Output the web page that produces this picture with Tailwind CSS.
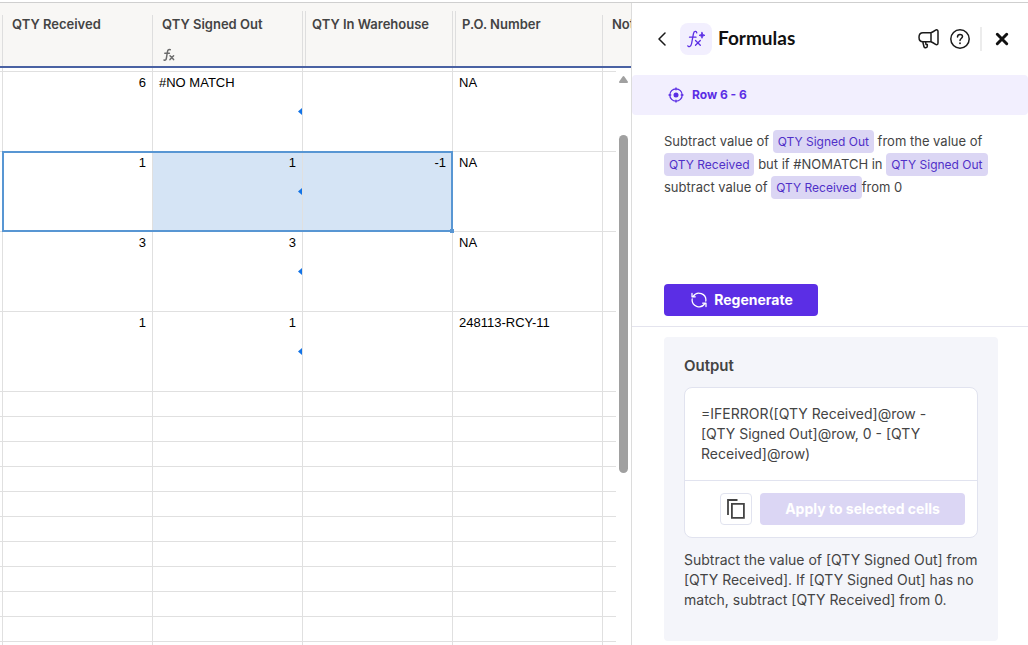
<!DOCTYPE html>
<html lang="en">
<head>
<meta charset="utf-8">
<meta name="viewport" content="width=device-width, initial-scale=1">
<title>Formulas</title>
<script src="https://cdn.jsdelivr.net/npm/@tailwindcss/browser@4"></script>
</head>
<body class="bg-white pt-0.5 font-['Inter',sans-serif] text-[#444]">
<div class="flex h-[calc(100vh-2px)] overflow-hidden border-t border-[#cfcfcf]">

  <!-- Sheet -->
  <main class="relative min-w-0 flex-1 overflow-hidden">
    <table class="w-full table-fixed border-separate border-spacing-0 font-['Liberation_Sans',Arial,sans-serif] text-[13px] leading-[22px] text-black [&_td]:border-r [&_td]:border-b [&_td]:border-[#e0e0e0] [&_td]:p-0 [&_td]:align-top [&_td:last-child]:border-r-0">
      <colgroup>
        <col class="w-[3px]"><col class="w-[150px]"><col class="w-[150px]"><col class="w-[150px]"><col class="w-[150px]"><col>
      </colgroup>
      <thead>
        <tr class="h-[65px] bg-[#f8f7f5] text-left align-top font-['Inter',sans-serif] text-[13px] leading-4 text-[#444] [&>*]:border-b-2 [&>*]:border-[#4a62a3] [&>*]:p-0 [&>*]:align-top [&>*]:font-semibold">
          <th aria-hidden="true"><div class="mt-3 ml-0.5 h-[51px] w-px bg-[#dedede]"></div></th>
          <th scope="col"><div class="mt-3 h-[51px] border-r border-[#dedede] pt-px pl-[9px]">QTY Received</div></th>
          <th scope="col"><div class="mt-2 h-[55px] border-r border-[#dedede] pt-[5px] pl-[9px]">QTY Signed Out
            <svg class="mt-4 ml-px" width="12" height="14" viewBox="0 0 12 14" fill="none" stroke="#6b6b6b" stroke-width="1.5" stroke-linecap="round"><path d="M7.3 1.8C5.6 1 4.7 2 4.4 4L3.4 10.2C3.1 12 2.3 12.6 1 12M1.8 5.3h4.6M7 7.8l3.6 3.8M10.6 7.8L7 11.6"/></svg></div></th>
          <th scope="col"><div class="mt-2 h-[55px] border-r border-[#dedede] pl-0.5"><div class="h-full border-l border-[#dedede] pt-[5px] pl-1.5">QTY In Warehouse</div></div></th>
          <th scope="col"><div class="mt-2 h-[55px] pl-0.5"><div class="h-full border-l border-[#dedede] pt-[5px] pl-1.5">P.O. Number</div></div></th>
          <th scope="col"><div class="mt-3 -ml-px h-[51px] overflow-hidden border-l border-[#dedede] pt-px pl-[9px] whitespace-nowrap">Notes</div></th>
        </tr>
      </thead>
      <tbody>
        <tr class="h-1"><td></td><td></td><td></td><td></td><td></td><td></td></tr>
        <tr class="h-20">
          <td></td><td><div class="pr-1.5 text-right">6</div></td>
          <td><div class="relative h-[79px] pl-1.5">#NO MATCH<svg class="absolute right-0 top-9" width="4" height="7" viewBox="0 0 4 7" fill="#1273e6" aria-hidden="true"><path d="M4 0v7L0 3.5z"/></svg></div></td>
          <td></td><td><div class="pl-1.5">NA</div></td><td></td>
        </tr>
        <tr class="h-20">
          <td></td>
          <td><div class="relative h-[79px] pr-1.5 text-right">1
            <!-- Selection outline across three cells -->
            <div class="absolute -top-px -left-px h-[81px] w-[451px] border-2 border-[#5896d3]"><span class="absolute -right-[3px] -bottom-[3px] size-1 bg-[#5896d3]"></span></div></div></td>
          <td class="bg-[#d5e4f5]"><div class="relative h-[79px] pr-1.5 text-right">1<svg class="absolute right-0 top-9" width="4" height="7" viewBox="0 0 4 7" fill="#1273e6" aria-hidden="true"><path d="M4 0v7L0 3.5z"/></svg></div></td>
          <td class="bg-[#d5e4f5]"><div class="pr-1.5 text-right">-1</div></td><td><div class="pl-1.5">NA</div></td><td></td>
        </tr>
        <tr class="h-20">
          <td></td><td><div class="pr-1.5 text-right">3</div></td>
          <td><div class="relative h-[79px] pr-1.5 text-right">3<svg class="absolute right-0 top-9" width="4" height="7" viewBox="0 0 4 7" fill="#1273e6" aria-hidden="true"><path d="M4 0v7L0 3.5z"/></svg></div></td>
          <td></td><td><div class="pl-1.5">NA</div></td><td></td>
        </tr>
        <tr class="h-20">
          <td></td><td><div class="pr-1.5 text-right">1</div></td>
          <td><div class="relative h-[79px] pr-1.5 text-right">1<svg class="absolute right-0 top-9" width="4" height="7" viewBox="0 0 4 7" fill="#1273e6" aria-hidden="true"><path d="M4 0v7L0 3.5z"/></svg></div></td>
          <td></td><td><div class="pl-1.5">248113-RCY-11</div></td><td></td>
        </tr>
        <tr class="h-[25px]"><td></td><td></td><td></td><td></td><td></td><td></td></tr>
        <tr class="h-[25px]"><td></td><td></td><td></td><td></td><td></td><td></td></tr>
        <tr class="h-[25px]"><td></td><td></td><td></td><td></td><td></td><td></td></tr>
        <tr class="h-[25px]"><td></td><td></td><td></td><td></td><td></td><td></td></tr>
        <tr class="h-[25px]"><td></td><td></td><td></td><td></td><td></td><td></td></tr>
        <tr class="h-[25px]"><td></td><td></td><td></td><td></td><td></td><td></td></tr>
        <tr class="h-[25px]"><td></td><td></td><td></td><td></td><td></td><td></td></tr>
        <tr class="h-[25px]"><td></td><td></td><td></td><td></td><td></td><td></td></tr>
        <tr class="h-[25px]"><td></td><td></td><td></td><td></td><td></td><td></td></tr>
        <tr class="h-[25px]"><td></td><td></td><td></td><td></td><td></td><td></td></tr>
        <tr class="h-[25px]"><td></td><td></td><td></td><td></td><td></td><td></td></tr>
      </tbody>
    </table>
    <!-- Scrollbar -->
    <div class="absolute top-[65px] right-0 bottom-0 flex w-[15px] flex-col items-center bg-white pt-2">
      <svg width="9" height="7" viewBox="0 0 9 7" fill="#a0a0a0" aria-hidden="true"><path d="M4.5 0c.4 0 .6.2.8.5l3.5 5c.4.8.1 1.5-.8 1.5H1C.1 7-.2 6.3.2 5.500l3.500-5c.2-.3.4-.5.8-.5z"/></svg>
      <div class="mt-[52px] h-[338px] w-[9px] rounded-full bg-[#a0a0a0]"></div>
    </div>
  </main>

  <!-- Formulas panel -->
  <aside class="w-[397px] shrink-0 border-l border-[#dcdcdc] bg-white">
    <header class="flex h-[72px] items-center pr-[19px] pl-6">
      <button type="button" aria-label="Back" class="mr-3 flex h-6 w-3 items-center justify-center text-[#1a1a1a]"><svg width="8" height="14" viewBox="0 0 8 14" fill="none" stroke="currentColor" stroke-width="1.5" stroke-linecap="round" stroke-linejoin="round"><path d="M7 1L1 7l6 6"/></svg></button>
      <span class="flex size-8 items-center justify-center rounded-lg bg-[#f2effe]"><svg width="20" height="18" viewBox="0 0 20 18" fill="none" stroke="#5b2ee5" stroke-width="1.3" stroke-linecap="round" stroke-linejoin="round"><path d="M10.800 2.800C10.500 .8 8 .6 7.400 3.800L5.600 13.500C5.100 16.500 2.500 17.600 1.800 15.800M3.500 7.200h6.500M9.500 10.500l4.800 4.800M14.300 10.500l-4.800 4.800"/><path d="M16 2.300l.8 2.200L19 5.300l-2.200.8L16 8.300l-.8-2.200-2.200-.8 2.200-.8z" fill="#5b2ee5" stroke-width=".8"/></svg></span>
      <h1 class="ml-1.5 flex-1 pb-0.5 font-['Lato',sans-serif] text-[19px] leading-6 font-bold text-[#111]">Formulas</h1>
      <button type="button" aria-label="Announcements" class="text-[#1a1a1a]"><svg width="22" height="20" viewBox="0 0 22 20" fill="none" stroke="currentColor" stroke-width="1.5" stroke-linecap="round" stroke-linejoin="round"><path d="M13 3.800H5C2.400 3.800 1 5.800 1 8.300s1.400 4.500 4 4.500h8zM13 3.800c1.500-.6 2.800-1.400 4.200-2.400 1.400-1 2.800-.6 2.800 1.200v11.400c0 1.800-1.400 2.200-2.800 1.200-1.400-1-2.700-1.800-4.200-2.400M4.800 13l1.200 4.700c.4 1.500 3.300 1.300 3.300-.4v-1.800H8L7.600 13"/></svg></button>
      <button type="button" aria-label="Help" class="ml-2.5 text-[#1a1a1a]"><svg width="20" height="20" viewBox="0 0 20 20" fill="none" stroke="currentColor" stroke-width="1.5" stroke-linecap="round"><circle cx="10" cy="10" r="9.200"/><path d="M7.500 8c0-3.500 5-3.300 5-.4 0 1.900-2.500 1.900-2.500 3.900"/><path d="M10 14.200v.1" stroke-width="1.800"/></svg></button>
      <span class="mx-2.5 h-6 w-0.5 bg-[#ececec]"></span>
      <button type="button" aria-label="Close" class="ml-[3px] text-[#111]"><svg width="14" height="14" viewBox="0 0 14 14" fill="none" stroke="currentColor" stroke-width="3" stroke-linecap="round"><path d="M2.300 2.300l9.400 9.400M11.700 2.300l-9.400 9.400"/></svg></button>
    </header>

    <div class="flex h-10 items-center gap-2 rounded-sm bg-[#f2effe] pl-9 text-[12px] font-bold text-[#5b2ee5]">
      <svg width="16" height="16" viewBox="0 0 16 16" fill="none" stroke="#5b2ee5" stroke-width="1.300" stroke-linecap="round"><circle cx="8" cy="8" r="6.200"/><circle cx="8" cy="8" r="2.500" fill="#5b2ee5" stroke="none"/><path d="M8 1v1.800M8 13.200v1.800M1 8h1.800M13.200 8h1.800"/></svg>
      <span>Row 6 - 6</span>
    </div>

    <div class="flex h-[212px] flex-col border-b border-[#e4e4ee] px-8 pt-[15px] pb-2.5">
      <div role="textbox" aria-label="Formula prompt" aria-multiline="true" contenteditable="true" spellcheck="false" class="flex-1 text-[13px] leading-[23px] whitespace-nowrap outline-none">Subtract value of <span class="rounded-sm bg-[#dbd6f4] px-[5px] py-1 text-[12px] text-[#5030c8]">QTY Signed Out</span> from the value of<br><span class="rounded-sm bg-[#dbd6f4] px-[5px] py-1 text-[12px] text-[#5030c8]">QTY Received</span> but if #NOMATCH in <span class="rounded-sm bg-[#dbd6f4] px-[5px] py-1 text-[12px] text-[#5030c8]">QTY Signed Out</span><br>subtract value of <span class="rounded-sm bg-[#dbd6f4] px-[5px] py-1 text-[12px] text-[#5030c8]">QTY Received</span>from 0</div>
      <button type="button" class="flex h-8 w-[154px] items-center justify-center gap-[7px] rounded-sm bg-[#5b2ee5] pl-0.5 text-sm font-bold text-white"><svg width="16" height="16" viewBox="0 0 16 16" fill="none" stroke="currentColor" stroke-width="1.300" stroke-linecap="round" stroke-linejoin="round"><path d="M14.800 9A6.900 6.900 0 0 0 2.200 4.300M1 1.500v3.300h3.300M1.200 7A6.900 6.900 0 0 0 13.800 11.700M15 14.500v-3.300h-3.300"/></svg>Regenerate</button>
    </div>

    <section class="mt-2.5 mr-[30px] ml-8 rounded-sm bg-[#f4f5fa] px-5 pt-[18px] pb-[31px] text-sm leading-5">
      <h2 class="text-[15px] leading-[22px] font-semibold">Output</h2>
      <div class="mt-2.5 rounded-lg border border-[#e1e3ef] bg-white">
        <p class="border-b border-[#e1e3ef] px-4 pt-4 pb-4">=IFERROR([QTY Received]@row -<br>[QTY Signed Out]@row, 0 - [QTY<br>Received]@row)</p>
        <div class="flex justify-end gap-2 p-3">
          <button type="button" aria-label="Copy formula" class="flex size-8 items-center justify-center rounded-sm border border-[#e1e3ef]"><svg width="18" height="20" viewBox="0 0 18 20" fill="none" stroke="#444" stroke-width="1.800"><path d="M1 16V1h9.500M4.900 4.900h12v14h-12z"/></svg></button>
          <button type="button" disabled class="h-8 w-[205px] rounded-sm bg-[#dbd6f4] text-sm font-bold text-white">Apply to selected cells</button>
        </div>
      </div>
      <p class="mt-3 whitespace-nowrap">Subtract the value of [QTY Signed Out] from<br>[QTY Received]. If [QTY Signed Out] has no<br>match, subtract [QTY Received] from 0.</p>
    </section>
  </aside>
</div>
</body>
</html>
